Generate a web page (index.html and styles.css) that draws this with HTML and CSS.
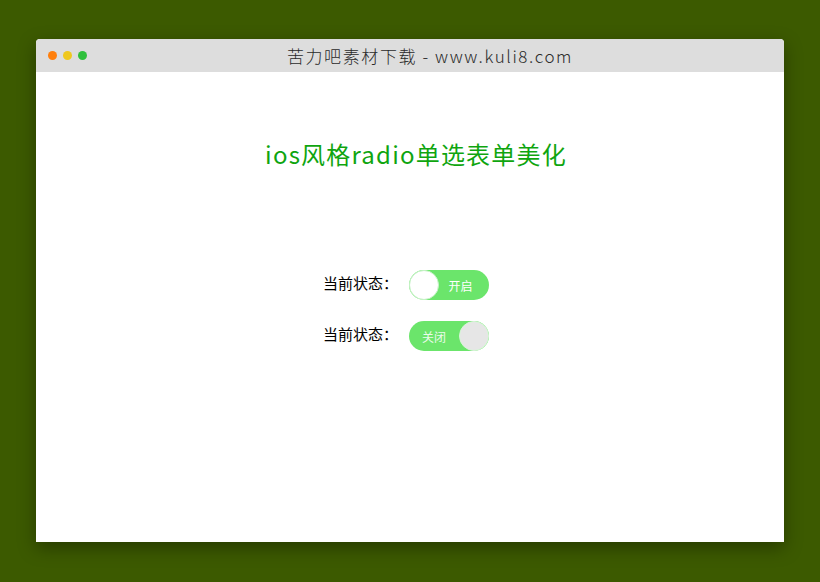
FILE: index.html
```html
<!DOCTYPE html>
<html>
<head>
	<meta charset="utf-8">
	<title>ios风格radio单选表单美化</title>
	<link rel="stylesheet" href="styles.css">
</head>
<body>
	<div class="window">
		<div class="titlebar">
			<div class="dots">
				<span class="dot orange"></span>
				<span class="dot yellow"></span>
				<span class="dot green"></span>
			</div>
			<div class="title">苦力吧素材下载 - www.kuli8.com</div>
		</div>
		<div class="content">
			<h1>ios风格radio单选表单美化</h1>
			<div class="rows">
				<div class="row">
					<span class="label">当前状态：</span>
					<label class="switch on">
						<span class="knob"></span>
						<span class="text">开启</span>
					</label>
				</div>
				<div class="row">
					<span class="label">当前状态：</span>
					<label class="switch off">
						<span class="text">关闭</span>
						<span class="knob"></span>
					</label>
				</div>
			</div>
		</div>
	</div>
</body>
</html>
```

FILE: styles.css
```css
body {
	margin: 0;
	width: 820px;
	height: 582px;
	background-color: #3c5a00;
	font-family: "Microsoft YaHei", "Noto Sans CJK SC", "Noto Sans", sans-serif;
	overflow: hidden;
}
.window {
	width: 748px;
	height: 503px;
	margin: 39px 0 0 36px;
	background-color: #fff;
	border-radius: 4px 4px 0 0;
	box-shadow: 0 6px 18px rgba(0, 0, 0, 0.35);
	display: flex;
	flex-direction: column;
}
.titlebar {
	height: 33px;
	background-color: #dddddd;
	border-radius: 4px 4px 0 0;
	display: flex;
	align-items: center;
	position: relative;
}
.dots {
	display: flex;
	gap: 6px;
	padding-left: 12px;
}
.dot {
	width: 9px;
	height: 9px;
	border-radius: 50%;
}
.orange { background-color: #ff7f0c; }
.yellow { background-color: #efc81e; }
.green { background-color: #2fc03c; }
.title {
	position: absolute;
	left: 40px;
	right: 0;
	top: 4px;
	text-align: center;
	font-size: 17px;
	font-weight: 300;
	color: #2a2a2a;
	letter-spacing: 1.6px;
}
.content {
	flex: 1;
	display: flex;
	flex-direction: column;
	align-items: center;
}
h1 {
	margin: 66px 0 0 12px;
	font-size: 24px;
	font-weight: normal;
	color: #0fa50f;
	line-height: 32px;
	letter-spacing: 1.2px;
}
.rows {
	margin-top: 100px;
	display: flex;
	flex-direction: column;
	gap: 21px;
	margin-left: -8px;
}
.row {
	display: flex;
	align-items: center;
}
.label {
	font-size: 15px;
	color: #000;
	margin-right: 11px;
	padding-bottom: 5px;
}
.switch {
	width: 80px;
	height: 30px;
	border-radius: 15px;
	background-color: #6be56b;
	display: flex;
	align-items: center;
	cursor: pointer;
	box-sizing: border-box;
}
.knob {
	width: 30px;
	height: 30px;
	border-radius: 50%;
	box-sizing: border-box;
	border: 1px solid #c8f2c8;
}
.switch.on .knob {
	background-color: #fff;
}
.switch.off .knob {
	background-color: #e6e6e6;
	border-color: #d8f5d8;
}
.text {
	flex: 1;
	text-align: center;
	font-size: 12px;
	color: #fff;
}
.switch.on .text {
	padding-right: 7px;
}
.switch.off .text {
	color: #eafbea;
}
```
